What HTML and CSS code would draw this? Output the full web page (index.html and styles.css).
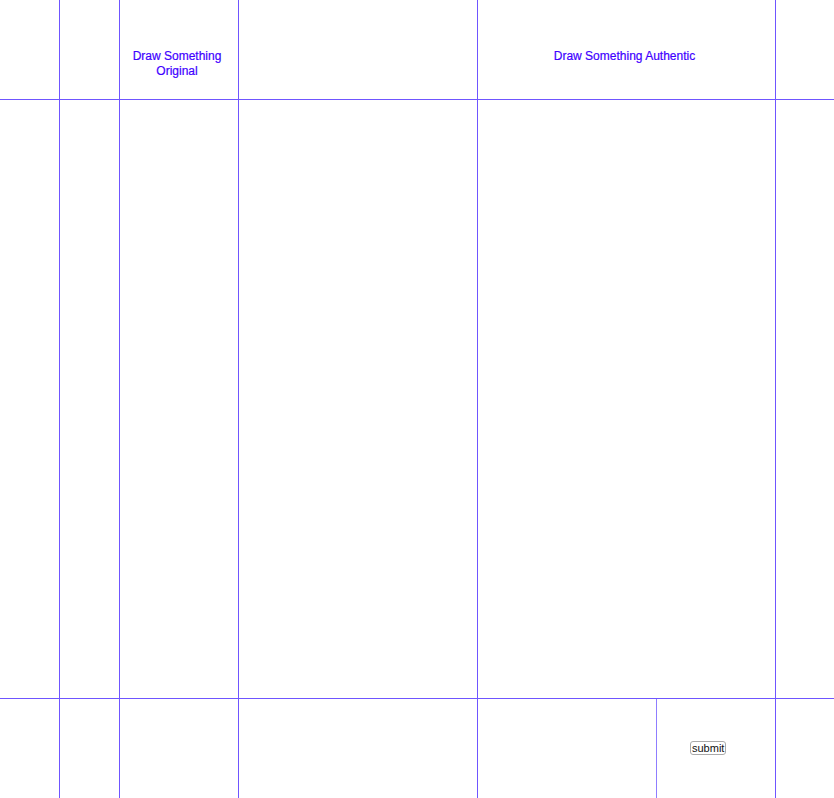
FILE: index.html
```html
<!DOCTYPE html>
<html lang="en">
<head>
  <meta charset="UTF-8" />
  <title>Draw Something</title>
  <link rel="stylesheet" href="styles.css">
</head>
<body>
<div class="board">
  <!-- top row -->
  <div class="cell"></div>
  <div class="cell line-left"></div>
  <div class="cell line-left title">Draw Something Original</div>
  <div class="cell line-left"></div>
  <div class="cell line-left title">Draw Something Authentic</div>
  <div class="cell line-left"></div>

  <!-- canvas row -->
  <div class="cell line-top"></div>
  <div class="cell line-top line-left"></div>
  <div class="cell line-top line-left"></div>
  <div class="cell line-top line-left"></div>
  <div class="cell line-top line-left"></div>
  <div class="cell line-top line-left"></div>

  <!-- bottom row -->
  <div class="cell line-top"></div>
  <div class="cell line-top line-left"></div>
  <div class="cell line-top line-left"></div>
  <div class="cell line-top line-left"></div>
  <div class="cell line-top line-left split">
    <div class="split-left"></div>
    <div class="split-right">
      <button type="button" class="submit">submit</button>
    </div>
  </div>
  <div class="cell line-top line-left"></div>
</div>
</body>
</html>
```

FILE: styles.css
```css
html, body {
  margin: 0;
  padding: 0;
  background: #fff;
  font-family: "Liberation Sans", Arial, sans-serif;
}

.board {
  display: grid;
  grid-template-columns: 59px 60px 119px 239px 298px 59px;
  grid-template-rows: 99px 599px 100px;
  width: 834px;
  height: 798px;
}

.cell {
  box-sizing: border-box;
}

.line-left {
  border-left: 1px solid #6f55ff;
}

.line-top {
  border-top: 1px solid #6f55ff;
}

.title {
  color: #4000ff;
  font-size: 12px;
  line-height: 15px;
  text-align: center;
  padding: 49px 10px 0 6px;
  -webkit-text-stroke: 0.2px #4000ff;
}

.split {
  display: flex;
}

.split-left {
  width: 178px;
  border-right: 1px solid #8f7dff;
}

.split-right {
  flex: 1;
  display: flex;
  align-items: center;
  padding-left: 33px;
}

.submit {
  font-family: "Liberation Sans", Arial, sans-serif;
  font-size: 11px;
  line-height: 12px;
  color: #111;
  background: #fff;
  border: 1px solid #aaa;
  border-radius: 3px;
  padding: 0 1px;
  margin-top: -2px;
}
```
